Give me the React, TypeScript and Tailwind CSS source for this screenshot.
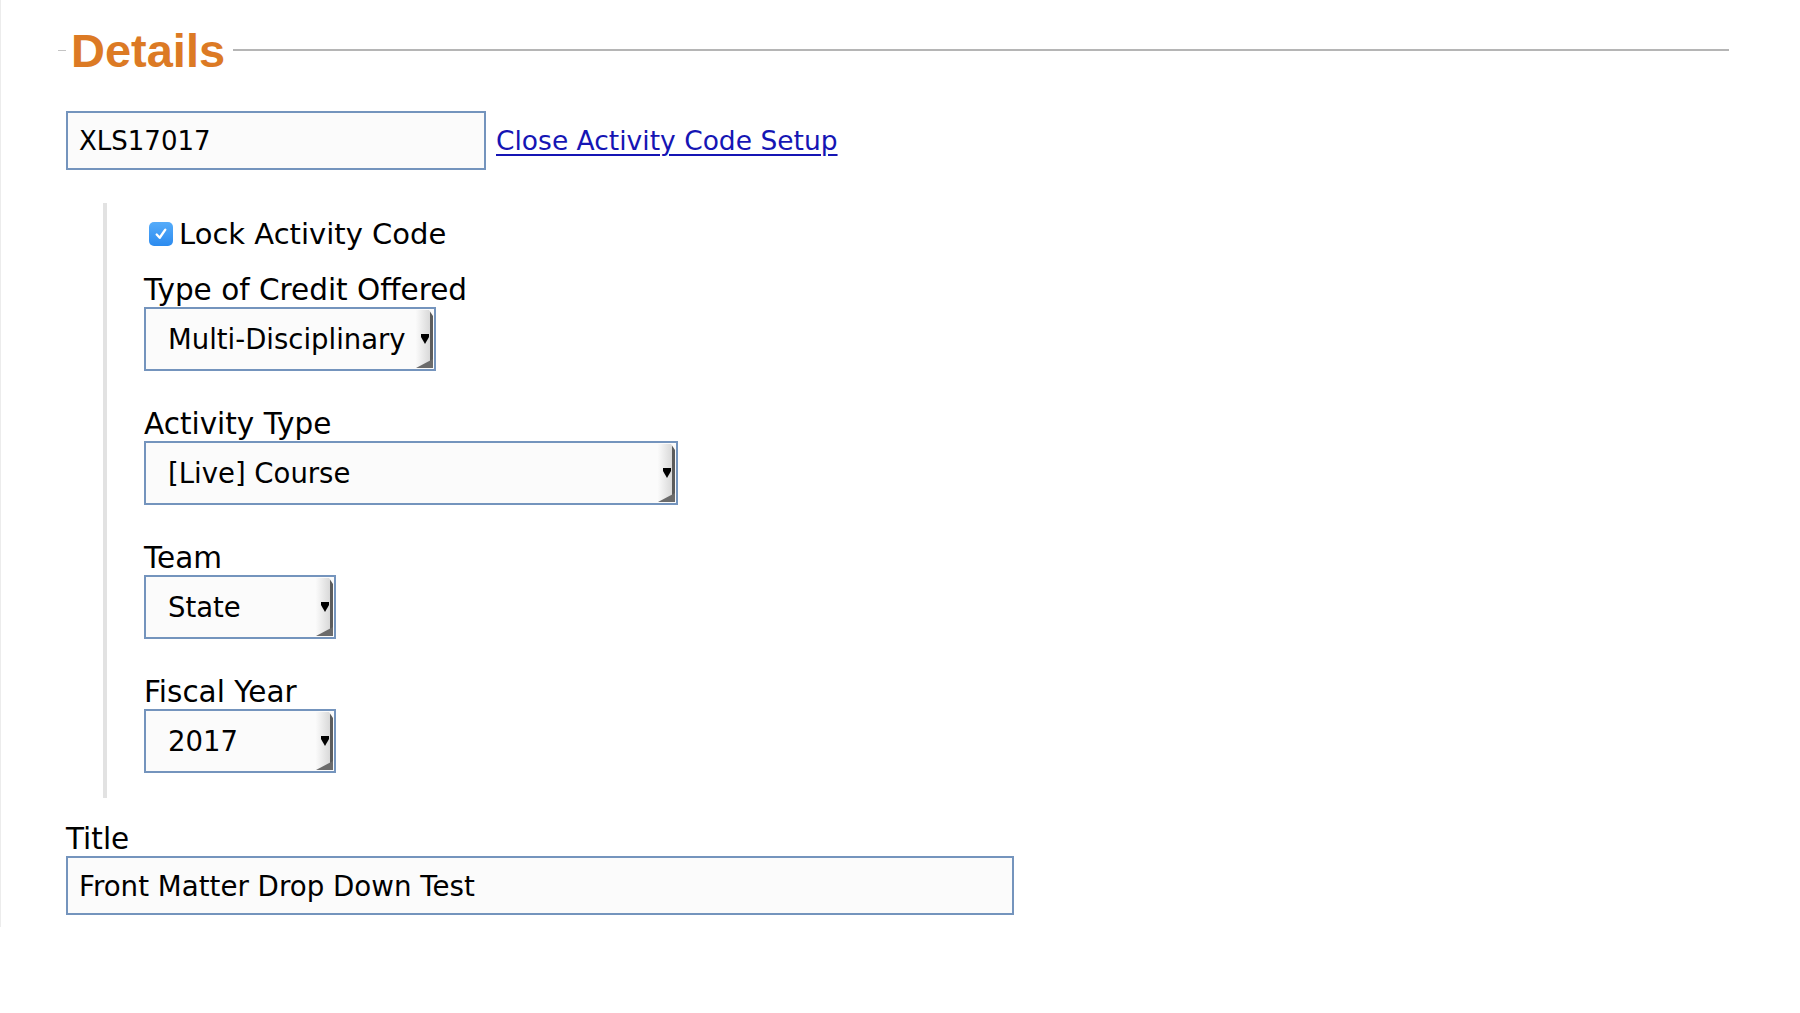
import { ReactNode } from "react";

function Label({ children }: { children: ReactNode }) {
  return <div className="pt-[2px] text-[29.5px] leading-[34px] text-black">{children}</div>;
}

// old-style mac select with the bevelled arrow strip on the right
function FakeSelect({ value, width }: { value: string; width: string }) {
  return (
    <div className={`flex h-[64px] border-2 border-[#7494bd] bg-[#fbfbfb] ${width}`}>
      <span className="flex-1 self-center pl-[22px] pt-[2px] text-[27.5px] leading-none text-black">{value}</span>
      <div className="relative my-[1px] mr-[1px] flex w-[17px] items-center justify-end border-r-[3px] border-r-[#5c5c5c] bg-gradient-to-r from-[#fafafa] to-[#d9d9d9]">
        <svg width="8" height="10" viewBox="0 0 8 10" className="mr-[1px]">
          <polygon points="0,0 8,0 8,3 4,10 0,3" fill="#000" />
        </svg>
        <svg width="17" height="9" viewBox="0 0 17 9" className="absolute bottom-0 left-0">
          <polygon points="0,9 17,0 17,9" fill="#6b6b6b" />
        </svg>
        <svg width="4" height="6" viewBox="0 0 4 6" className="absolute -right-[3px] top-0">
          <polygon points="0,0 4,0 4,6" fill="#fafafa" />
        </svg>
      </div>
    </div>
  );
}

export default function App() {
  return (
    <div className="min-h-[1013px] bg-white font-['DejaVu_Sans',Verdana,sans-serif]">
      <div className="border-l border-[#ececec] pb-[12px] pl-[57px] pr-[71px] pt-[24px]">
        {/* legend */}
        <div className="flex h-[52px] items-center">
          <div className="h-[1px] w-[8px] bg-[#c4c4c4]" />
          <span className="pl-[5px] pr-[8px] font-['Liberation_Sans',Arial,sans-serif] text-[47px] font-bold leading-none text-[#dc7a24]">
            Details
          </span>
          <div className="h-[2px] flex-1 bg-[#b5b5b5]" />
        </div>

        <div className="ml-[8px]">
          <div className="mt-[35px] flex items-center gap-[10px]">
            <div className="flex h-[59px] w-[420px] items-center border-2 border-[#7494bd] bg-[#fbfbfb] pl-[11px] pt-[2px] text-[26px] text-black">
              XLS17017
            </div>
            <a href="#" className="mt-[2px] text-[26.5px] leading-none text-[#1515b4] underline decoration-[2px] underline-offset-[4px]">
              Close Activity Code Setup
            </a>
          </div>

          <div className="ml-[37px] mt-[33px] border-l-4 border-[#e2e2e2] pb-[25px] pl-[37px] pt-[14px]">
            <div className="flex items-center gap-[6px] pl-[5px]">
              <span className="flex h-[24px] w-[24px] items-center justify-center rounded-[5px] bg-gradient-to-b from-[#55acfa] to-[#2c8bef]">
                <svg width="14" height="14" viewBox="0 0 13 13">
                  <path d="M2.5 7 L5.3 10 L10.5 2.5" fill="none" stroke="#fff" strokeWidth="2.2" strokeLinecap="round" strokeLinejoin="round" />
                </svg>
              </span>
              <span className="text-[29px] leading-[34px] text-black">Lock Activity Code</span>
            </div>

            <div className="mt-[20px]">
              <Label>Type of Credit Offered</Label>
              <FakeSelect value="Multi-Disciplinary" width="w-[292px]" />
            </div>
            <div className="mt-[34px]">
              <Label>Activity Type</Label>
              <FakeSelect value="[Live] Course" width="w-[534px]" />
            </div>
            <div className="mt-[34px]">
              <Label>Team</Label>
              <FakeSelect value="State" width="w-[192px]" />
            </div>
            <div className="mt-[34px]">
              <Label>Fiscal Year</Label>
              <FakeSelect value="2017" width="w-[192px]" />
            </div>
          </div>

          <div className="mt-[22px]">
            <Label>Title</Label>
            <div className="flex h-[59px] w-[948px] items-center border-2 border-[#7494bd] bg-[#fbfbfb] pl-[11px] pt-[3px] text-[27.7px] text-black">
              Front Matter Drop Down Test
            </div>
          </div>
        </div>
      </div>
    </div>
  );
}
